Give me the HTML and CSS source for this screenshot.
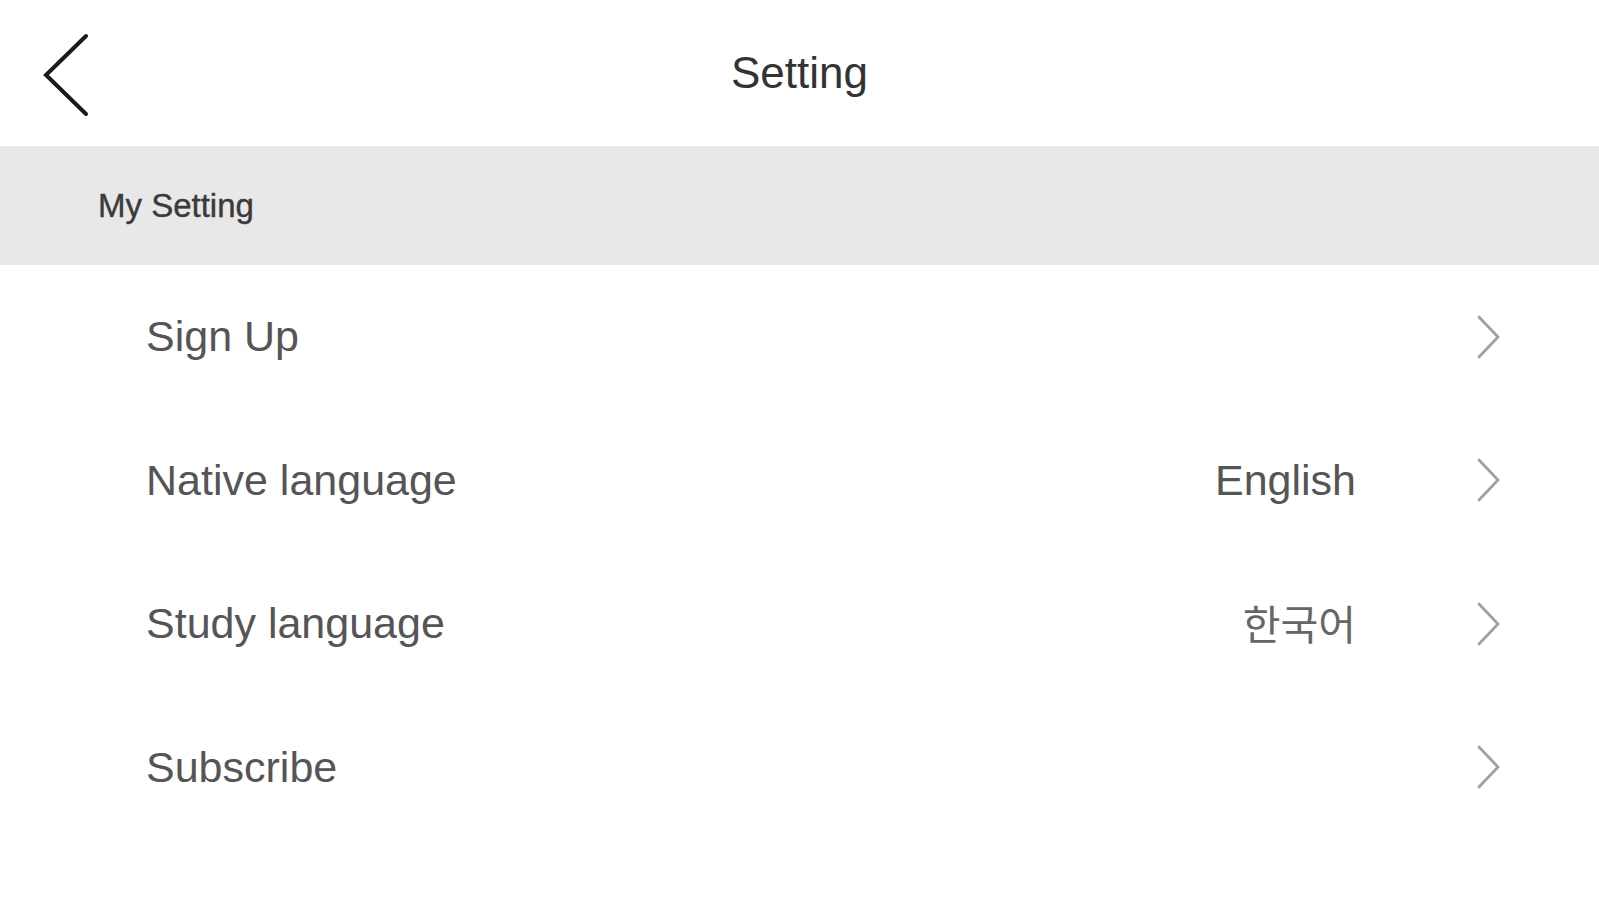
FILE: index.html
```html
<!DOCTYPE html>
<html lang="en">
<head>
<meta charset="utf-8">
<title>Setting</title>
<link rel="stylesheet" href="styles.css">
</head>
<body>
<header class="topbar">
  <div class="back">
    <svg width="46" height="84" viewBox="0 0 46 84"><polyline points="43,3 3,42 43,81" fill="none" stroke="#1a1a1a" stroke-width="4" stroke-linecap="round" stroke-linejoin="miter"/></svg>
  </div>
  <h1 class="title">Setting</h1>
  <div></div>
</header>
<div class="section">My Setting</div>
<ul class="list">
  <li class="row"><span class="label">Sign Up</span><span class="chev"><svg width="26" height="44" viewBox="0 0 26 44"><polyline points="3,2 22,22 3,42" fill="none" stroke="#a0a0a0" stroke-width="2.8" stroke-linecap="round"/></svg></span></li>
  <li class="row"><span class="label">Native language</span><span class="value">English</span><span class="chev"><svg width="26" height="44" viewBox="0 0 26 44"><polyline points="3,2 22,22 3,42" fill="none" stroke="#a0a0a0" stroke-width="2.8" stroke-linecap="round"/></svg></span></li>
  <li class="row"><span class="label">Study language</span><span class="value ko">한국어</span><span class="chev"><svg width="26" height="44" viewBox="0 0 26 44"><polyline points="3,2 22,22 3,42" fill="none" stroke="#a0a0a0" stroke-width="2.8" stroke-linecap="round"/></svg></span></li>
  <li class="row"><span class="label">Subscribe</span><span class="chev"><svg width="26" height="44" viewBox="0 0 26 44"><polyline points="3,2 22,22 3,42" fill="none" stroke="#a0a0a0" stroke-width="2.8" stroke-linecap="round"/></svg></span></li>
</ul>
</body>
</html>
```
FILE: styles.css
```css
html, body {
  margin: 0;
  padding: 0;
  background: #ffffff;
  font-family: "Liberation Sans", Arial, sans-serif;
}
.topbar {
  height: 146px;
  display: grid;
  grid-template-columns: 1fr auto 1fr;
  align-items: center;
  padding: 0 43px;
  box-sizing: border-box;
}
.back {
  display: flex;
  align-items: center;
  height: 84px;
  margin-top: 3px;
}
.back svg { display: block; }
.title {
  margin: 0;
  font-size: 44px;
  font-weight: normal;
  color: #333333;
  line-height: 1;
}
.section {
  height: 119px;
  background: #e8e8e8;
  display: flex;
  align-items: center;
  padding-left: 98px;
  font-size: 33px;
  color: #3a3a3a;
  -webkit-text-stroke: 0.4px #3a3a3a;
}
.list {
  list-style: none;
  margin: 0;
  padding: 0;
}
.row {
  height: 143.5px;
  display: flex;
  align-items: center;
  padding: 0 97px 0 146px;
  font-size: 43px;
  color: #555555;
}
.label { flex: 1; }
.value {
  margin-right: 120px;
  color: #555555;
}
.value.ko {
  font-family: "Noto Sans CJK KR", sans-serif;
  font-size: 41px;
  color: #666666;
  margin-top: -4px;
}
.chev {
  display: flex;
  align-items: center;
}
.chev svg { display: block; }
```
